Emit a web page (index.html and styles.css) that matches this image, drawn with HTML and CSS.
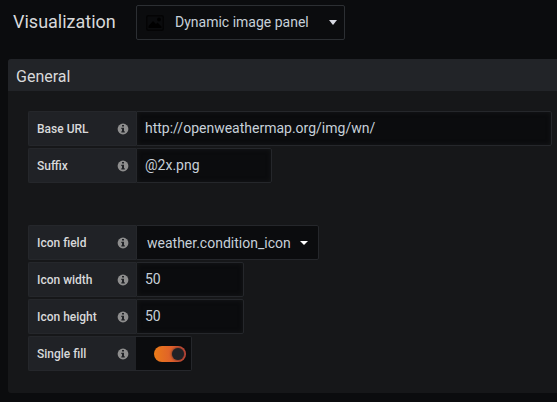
FILE: index.html
```html
<!DOCTYPE html>
<html lang="en">
<head>
<meta charset="utf-8">
<title>Visualization</title>
<link rel="stylesheet" href="styles.css">
</head>
<body>
<svg class="defs" width="0" height="0">
  <symbol id="info" viewBox="0 0 12 12">
    <circle cx="6" cy="6" r="5.4" fill="#8e8e8e"/>
    <path d="M5 2h2v1.6H5zM4.3 4.7H7v3.6h.8v1.2H4.3V8.300H5V5.900h-.7z" fill="#202226"/>
  </symbol>
</svg>
<header class="toolbar">
  <h1 class="toolbar-title">Visualization</h1>
  <div class="picker">
    <svg class="picker-icon" viewBox="0 0 18 16">
      <rect x=".75" y=".75" width="16.500" height="14.500" rx="1.500" fill="#0a0b0d" stroke="#040405" stroke-width="1.500"/>
      <path d="M2.500 13v-2L7 6l3 3 1.500-1.500 4 4V13z" fill="#000"/>
      <circle cx="13" cy="4.500" r="1.900" fill="#000"/>
    </svg>
    <span class="picker-text">Dynamic image panel</span>
    <i class="caret caret-large"></i>
  </div>
</header>
<section class="panel">
  <h2 class="panel-title">General</h2>
  <div class="panel-body">
    <div class="group">
      <div class="row"><label class="label">Base URL<svg class="info"><use href="#info"/></svg></label><div class="input wide">http://openweathermap.org/img/wn/</div></div>
      <div class="row"><label class="label">Suffix<svg class="info"><use href="#info"/></svg></label><div class="input medium">@2x.png</div></div>
    </div>
    <div class="group">
      <div class="row"><label class="label">Icon field<svg class="info"><use href="#info"/></svg></label><div class="input select">weather.condition_icon<i class="caret"></i></div></div>
      <div class="row"><label class="label">Icon width<svg class="info"><use href="#info"/></svg></label><div class="input small">50</div></div>
      <div class="row"><label class="label">Icon height<svg class="info"><use href="#info"/></svg></label><div class="input small">50</div></div>
      <div class="row"><label class="label">Single fill<svg class="info"><use href="#info"/></svg></label><div class="input switch"><span class="track"><span class="knob"></span></span></div></div>
    </div>
  </div>
</section>
</body>
</html>
```

FILE: styles.css
```css
* { box-sizing: border-box; }
body {
  margin: 0;
  height: 402px;
  overflow: hidden;
  background: #0b0c0e;
  color: #c7d0d9;
  font-family: Roboto, sans-serif;
  font-size: 14px;
}
.defs { display: block; }
.toolbar {
  display: flex;
  align-items: center;
  height: 59px;
  padding: 0 0 15px 13px;
}
.toolbar-title {
  width: 123px;
  margin: 0;
  padding-bottom: 2px;
  font-size: 18px;
  font-weight: 400;
  color: #d8d9da;
}
.picker {
  display: flex;
  align-items: center;
  width: 209px;
  height: 35px;
  margin-top: 1px;
  padding: 0 7px 0 9px;
  border: 1px solid #2c2f33;
  border-radius: 2px;
}
.picker-icon { width: 18px; height: 16px; margin-right: 11px; }
.picker-text { padding-bottom: 2px; }
.caret {
  margin-left: auto;
  border: 4px solid transparent;
  border-top-color: #fff;
  border-bottom: 0;
}
.caret-large {
  border-width: 5px 4.500px 0;
  border-top-color: #d8d9e2;
}
.panel {
  width: 549px;
  height: 334px;
  margin-left: 8px;
  background: #161719;
  border-radius: 3px 0 0 3px;
  overflow: hidden;
}
.panel-title {
  height: 32px;
  margin: 0;
  padding: 1px 8px 0;
  background: #222428;
  font-size: 16px;
  line-height: 33px;
  font-weight: 400;
  color: #d8d9da;
}
.panel-body { padding: 20px 5px 0 20px; }
.group { margin-bottom: 40px; }
.row { display: flex; height: 37px; }
.label {
  display: flex;
  align-items: center;
  justify-content: space-between;
  width: 108px;
  height: 35px;
  padding: 0 7px 0 8px;
  border: 1px solid #25272b;
  border-right: 0;
  border-radius: 2px 0 0 2px;
  background: #202226;
  font-size: 12px;
  font-weight: 500;
  color: #d8d9da;
}
.info { width: 12px; height: 12px; }
.input {
  display: flex;
  align-items: center;
  height: 35px;
  padding: 0 8px 2px;
  border: 1px solid #25272b;
  border-radius: 0 2px 2px 0;
  background: #0b0c0e;
  box-shadow: inset 0 0 5px #161719;
}
.wide { width: 416px; }
.medium { width: 136px; }
.small { width: 108px; }
.select { width: 183px; padding: 0 10px; box-shadow: none; }
.switch { width: 56px; padding: 0 5px 0 18px; border-left: 0; box-shadow: none; }
.track {
  display: flex;
  justify-content: flex-end;
  width: 32px;
  height: 16px;
  padding: 2px;
  border-radius: 8px;
  background: linear-gradient(90deg, #eb7b18, #d44a3a);
}
.knob {
  width: 12px;
  height: 12px;
  border-radius: 50%;
  background: #202226;
  box-shadow: 0 0 3px #202226;
}
```
